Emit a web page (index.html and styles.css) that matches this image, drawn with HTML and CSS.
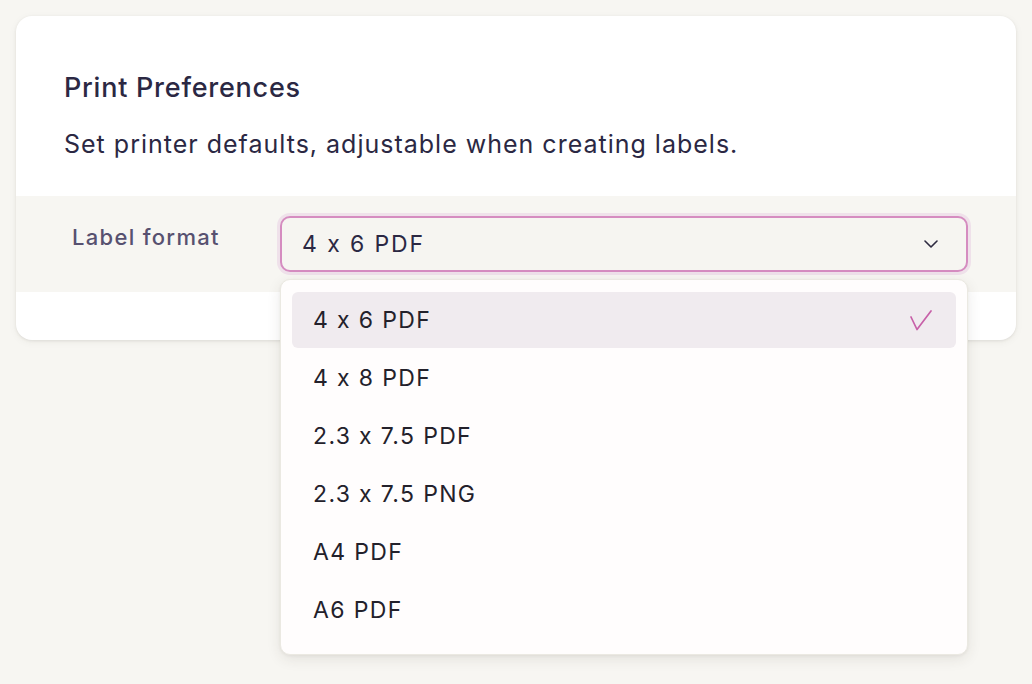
FILE: index.html
```html
<!DOCTYPE html>
<html lang="en">
<head>
<meta charset="utf-8">
<title>Print Preferences</title>
<link rel="stylesheet" href="styles.css">
</head>
<body>
<div class="card">
  <div class="card-head">
    <h2 class="title">Print Preferences</h2>
    <p class="subtitle">Set printer defaults, adjustable when creating labels.</p>
  </div>
  <div class="field-row">
    <label class="field-label">Label format</label>
    <div class="select-wrap">
      <div class="select">
        <span class="select-value">4 x 6 PDF</span>
        <svg class="chevron" width="14" height="8" viewBox="0 0 14 8"><path d="M1 1 L7 7 L13 1" fill="none" stroke="#2d2a40" stroke-width="1.6" stroke-linecap="round" stroke-linejoin="round"/></svg>
      </div>
      <ul class="menu">
        <li class="option selected"><span>4 x 6 PDF</span>
          <svg class="check" width="22" height="21" viewBox="0 0 22 21"><path d="M1 7 L7 19.5 L21 1" fill="none" stroke="#c760a8" stroke-width="1.7" stroke-linecap="round" stroke-linejoin="round"/></svg>
        </li>
        <li class="option"><span>4 x 8 PDF</span></li>
        <li class="option"><span>2.3 x 7.5 PDF</span></li>
        <li class="option"><span>2.3 x 7.5 PNG</span></li>
        <li class="option"><span>A4 PDF</span></li>
        <li class="option"><span>A6 PDF</span></li>
      </ul>
    </div>
  </div>
  <div class="card-foot"></div>
</div>
</body>
</html>
```
FILE: styles.css
```css
* { box-sizing: border-box; }
html, body { margin: 0; padding: 0; }
body {
  background: #f7f6f2;
  font-family: "Inter", "Liberation Sans", sans-serif;
  color: #2b2843;
  padding: 16px;
  height: 684px;
  overflow: hidden;
}
.card {
  width: 1000px;
  background: #ffffff;
  border-radius: 16px;
  box-shadow: 0 1px 3px rgba(60, 50, 40, 0.10), 0 2px 8px rgba(60, 50, 40, 0.05);
}
.card-head {
  padding: 54px 48px 34px 48px;
}
.title {
  margin: 0 0 20px 0;
  font-size: 27px;
  line-height: 36px;
  font-weight: 500;
  letter-spacing: 0.75px;
  color: #2b2843;
}
.subtitle {
  margin: 0;
  font-size: 25px;
  line-height: 36px;
  font-weight: 400;
  letter-spacing: 1px;
  color: #2b2843;
}
.field-row {
  display: flex;
  background: #f7f6f2;
  padding: 20px 48px 20px 56px;
}
.field-label {
  width: 208px;
  flex: none;
  font-size: 22px;
  line-height: 30px;
  padding-top: 6px;
  font-weight: 500;
  letter-spacing: 1.3px;
  color: #575170;
}
.select-wrap {
  position: relative;
  flex: 1;
}
.select {
  height: 56px;
  display: flex;
  align-items: center;
  justify-content: space-between;
  padding: 0 28px 0 20px;
  border: 2px solid #d58cc0;
  border-radius: 10px;
  background: #f6f5f1;
  box-shadow: 0 0 0 3px #efe1ea;
}
.select-value {
  font-size: 23px;
  letter-spacing: 1.9px;
  color: #2b2843;
}
.chevron { display: block; }
.menu {
  position: absolute;
  left: 0;
  right: 0;
  top: 63px;
  margin: 0;
  padding: 12px 11px 16px 11px;
  list-style: none;
  background: #fffdfd;
  border: 1px solid #ebe9e2;
  border-radius: 10px;
  box-shadow: 0 4px 14px rgba(60, 50, 40, 0.10), 0 1px 3px rgba(60, 50, 40, 0.06);
}
.option {
  height: 56px;
  display: flex;
  align-items: center;
  justify-content: space-between;
  padding: 0 24px 0 21px;
  margin-bottom: 2px;
  border-radius: 6px;
  font-size: 23px;
  letter-spacing: 1.35px;
  color: #23212b;
}
.option:last-child { margin-bottom: 0; }
.option.selected { background: #f0ebef; }
.check { display: block; margin-top: 1px; }
.card-foot { height: 48px; }
```
